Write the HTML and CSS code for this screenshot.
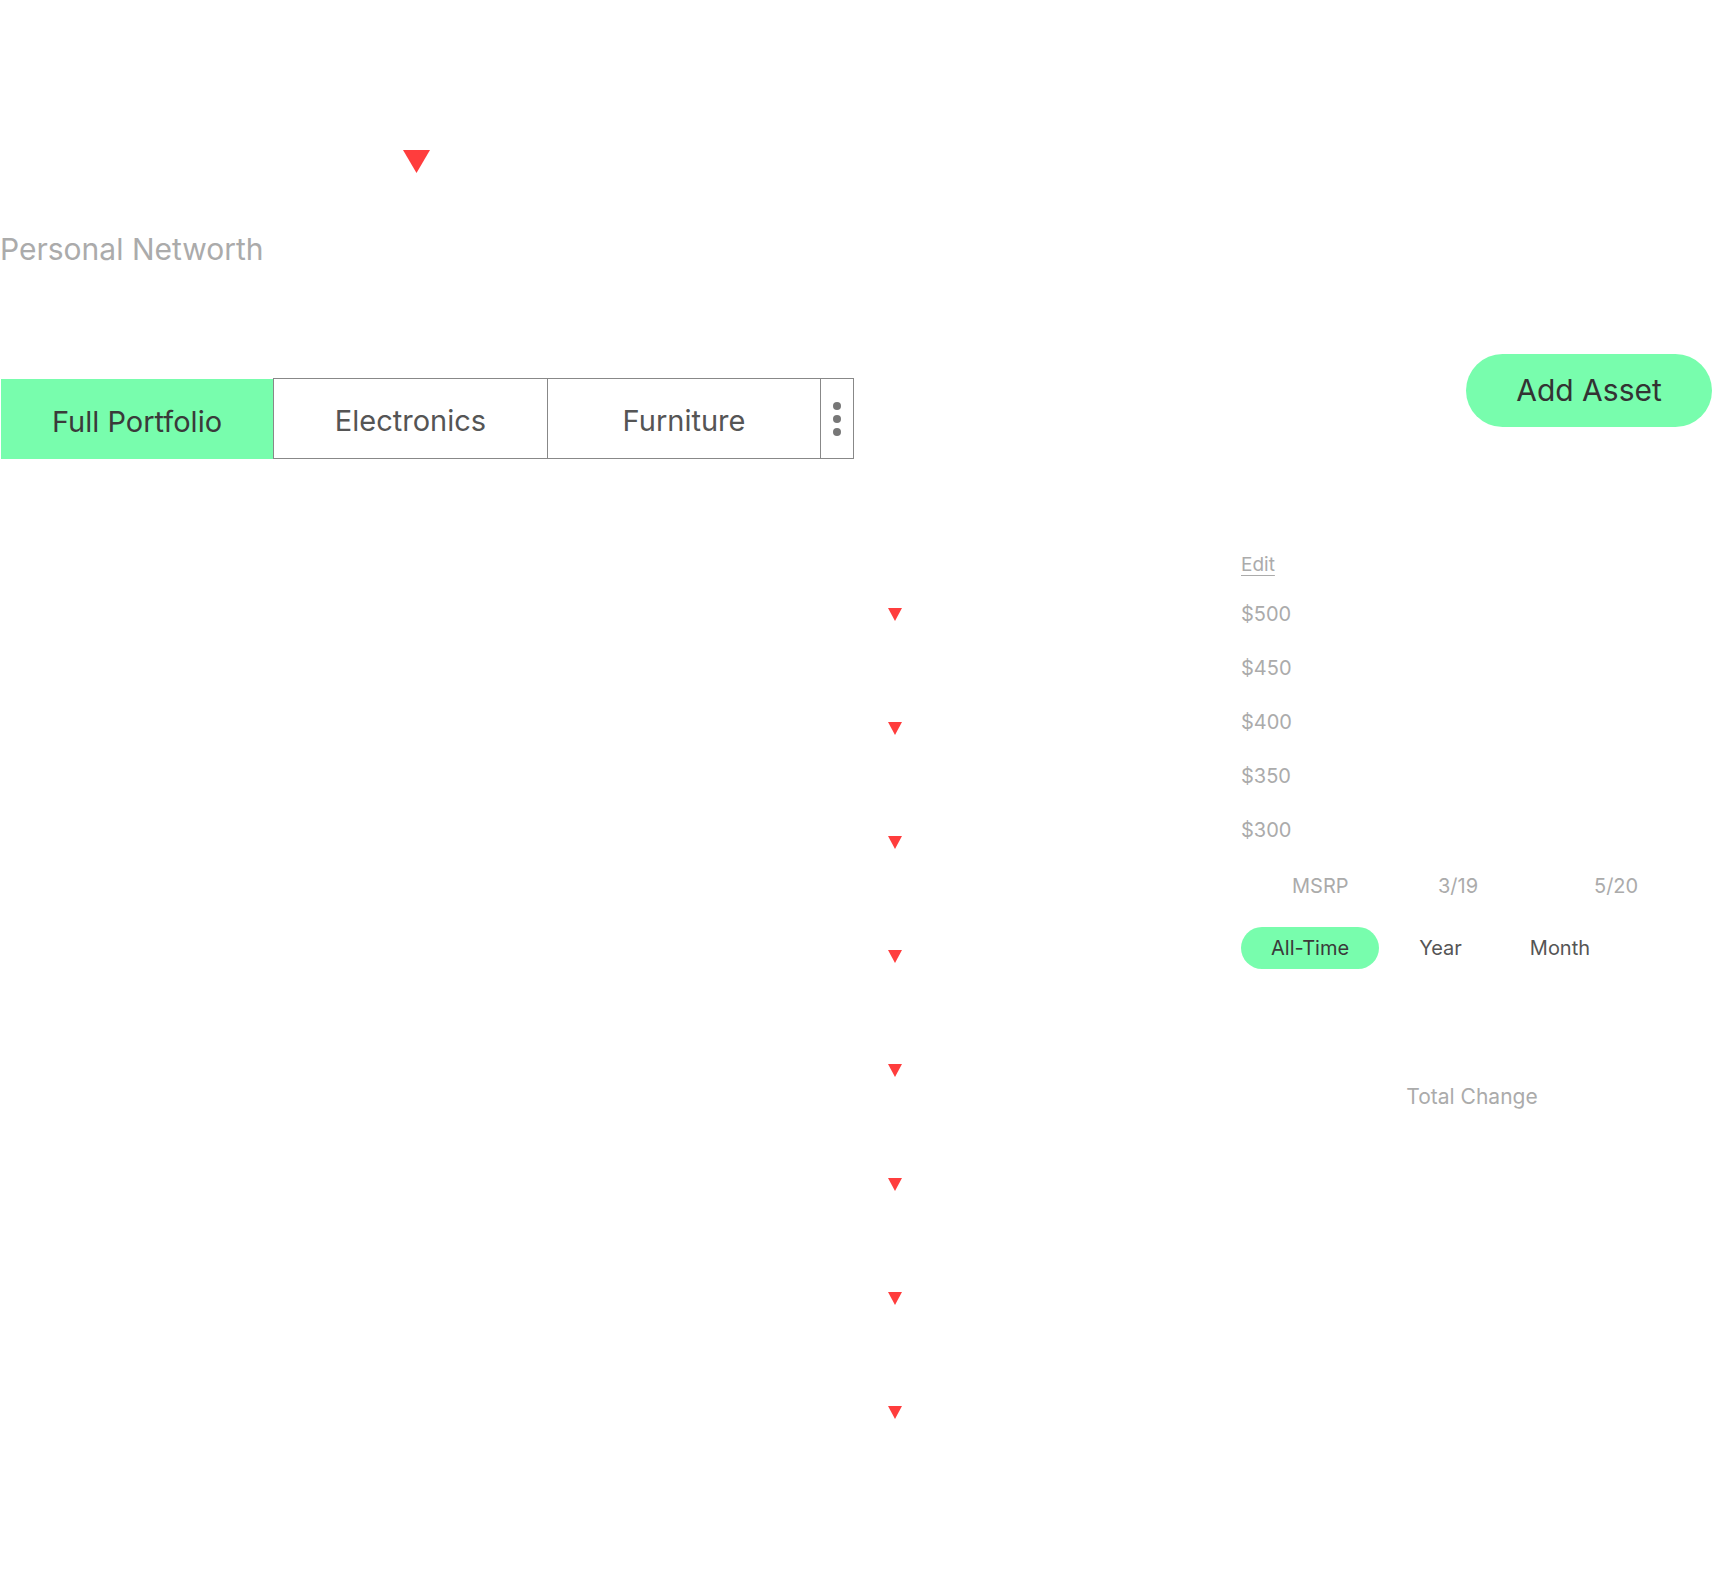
FILE: index.html
```html
<!DOCTYPE html>
<html lang="en">
<head>
<meta charset="utf-8">
<title>Personal Networth</title>
<link rel="stylesheet" href="styles.css">
</head>
<body>
<div class="page">
  <div class="top">
    <svg class="tri-lg" width="27" height="23" viewBox="0 0 27 23"><polygon points="0,0 27,0 13.5,23" fill="#ff3d3d"/></svg>
  </div>
  <h1 class="title">Personal Networth</h1>

  <div class="toolbar">
    <div class="tabs">
      <div class="tab tab-active">Full Portfolio</div>
      <div class="tab tab-outline tab-first">Electronics</div>
      <div class="tab tab-outline">Furniture</div>
      <div class="tab tab-outline tab-more">
        <span class="dot"></span><span class="dot"></span><span class="dot"></span>
      </div>
    </div>
    <button class="add-btn">Add Asset</button>
  </div>

  <div class="main">
    <div class="alerts">
      <svg class="tri-sm" width="14" height="13" viewBox="0 0 14 13"><polygon points="0,0 14,0 7,13" fill="#ff3d3d"/></svg>
      <svg class="tri-sm" width="14" height="13" viewBox="0 0 14 13"><polygon points="0,0 14,0 7,13" fill="#ff3d3d"/></svg>
      <svg class="tri-sm" width="14" height="13" viewBox="0 0 14 13"><polygon points="0,0 14,0 7,13" fill="#ff3d3d"/></svg>
      <svg class="tri-sm" width="14" height="13" viewBox="0 0 14 13"><polygon points="0,0 14,0 7,13" fill="#ff3d3d"/></svg>
      <svg class="tri-sm" width="14" height="13" viewBox="0 0 14 13"><polygon points="0,0 14,0 7,13" fill="#ff3d3d"/></svg>
      <svg class="tri-sm" width="14" height="13" viewBox="0 0 14 13"><polygon points="0,0 14,0 7,13" fill="#ff3d3d"/></svg>
      <svg class="tri-sm" width="14" height="13" viewBox="0 0 14 13"><polygon points="0,0 14,0 7,13" fill="#ff3d3d"/></svg>
      <svg class="tri-sm" width="14" height="13" viewBox="0 0 14 13"><polygon points="0,0 14,0 7,13" fill="#ff3d3d"/></svg>
    </div>

    <div class="panel">
      <div class="edit"><span class="edit-link">Edit</span></div>
      <div class="y-axis">
        <div class="y-label">$500</div>
        <div class="y-label">$450</div>
        <div class="y-label">$400</div>
        <div class="y-label">$350</div>
        <div class="y-label">$300</div>
      </div>
      <div class="x-axis">
        <span>MSRP</span>
        <span>3/19</span>
        <span>5/20</span>
      </div>
      <div class="periods">
        <span class="pill pill-active">All-Time</span>
        <span class="pill">Year</span>
        <span class="pill">Month</span>
      </div>
      <div class="total">Total Change</div>
    </div>
  </div>
</div>
</body>
</html>
```

FILE: styles.css
```css
html, body {
  margin: 0;
  padding: 0;
  background: #ffffff;
}

body {
  font-family: Inter, "Noto Sans", "Liberation Sans", sans-serif;
  color: #444;
}

.page {
  width: 1712px;
  min-height: 1580px;
}

.top {
  padding-top: 150px;
  padding-left: 403px;
}

.tri-lg {
  display: block;
}

.title {
  margin: 58px 0 0 0;
  font-size: 30px;
  line-height: 36px;
  font-weight: 400;
  color: #ababab;
}

.toolbar {
  margin-top: 87px;
  display: flex;
  justify-content: space-between;
  align-items: flex-start;
}

.tabs {
  display: flex;
  margin-top: 24px;
}

.tab {
  box-sizing: border-box;
  height: 81px;
  display: flex;
  align-items: center;
  justify-content: center;
  padding-top: 4px;
  font-size: 29px;
  color: #555;
}

.tab-active {
  width: 272px;
  height: 80px;
  margin: 1px 0 0 1px;
  background: #78fdad;
  color: #3a3a3a;
}

.tab-outline {
  border: 1px solid #888;
  width: 274px;
  margin-left: -1px;
}

.tab-first {
  margin-left: 0;
  width: 275px;
}

.tab-more {
  width: 34px;
  padding-top: 0;
  flex-direction: column;
  gap: 5px;
}

.dot {
  width: 8px;
  height: 8px;
  border-radius: 50%;
  background: #777;
}

.add-btn {
  width: 246px;
  height: 73px;
  border: none;
  border-radius: 37px;
  background: #78fdad;
  color: #333;
  font-family: inherit;
  font-size: 30px;
  padding: 0 0 2px 0;
}

.main {
  display: flex;
  align-items: flex-start;
}

.alerts {
  padding-top: 149px;
  padding-left: 888px;
  display: flex;
  flex-direction: column;
  gap: 101px;
}

.tri-sm {
  display: block;
}

.panel {
  margin-left: 339px;
  width: 471px;
  padding-top: 94px;
  color: #ababab;
}

.edit {
  font-size: 19px;
  line-height: 24px;
}

.edit-link {
  text-decoration: underline;
  text-underline-offset: 4px;
  text-decoration-thickness: 1px;
}

.y-axis {
  margin-top: 10px;
}

.y-label {
  font-size: 20px;
  line-height: 54px;
}

.x-axis {
  margin-top: 17px;
  padding-left: 51px;
  display: grid;
  grid-template-columns: 146px 156px auto;
  font-size: 20px;
  line-height: 24px;
}

.periods {
  margin-top: 29px;
  display: flex;
  gap: 12px;
}

.pill {
  height: 42px;
  line-height: 42px;
  padding: 0 28px;
  border-radius: 21px;
  font-size: 20px;
  color: #555;
}

.pill-active {
  padding: 0 30px;
  background: #78fdad;
  color: #3a3a3a;
}

.total {
  margin-top: 115px;
  text-align: center;
  font-size: 21px;
  line-height: 26px;
  padding-right: 9px;
}
```
